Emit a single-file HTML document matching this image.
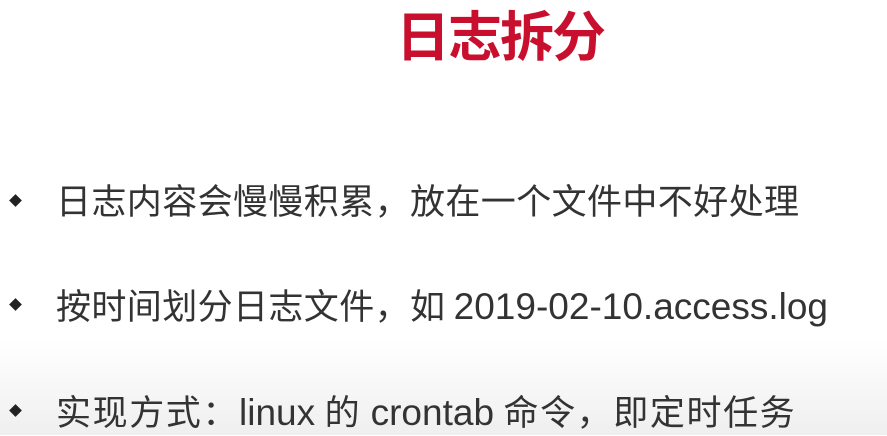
<!DOCTYPE html>
<html><head><meta charset="utf-8"><style>
html,body{margin:0;padding:0}
body{width:887px;height:435px;overflow:hidden;position:relative;background:linear-gradient(#fff 0,#fff 340px,#efefef 435px);font-family:"Liberation Sans","Noto Sans CJK SC",sans-serif}
.t{position:absolute;left:396px;top:0px;font-size:54px;font-weight:bold;color:#c8102e;font-family:"Noto Sans CJK SC",sans-serif;letter-spacing:-2px;line-height:66px}
.l{position:absolute;left:56px;font-size:35px;color:#333;white-space:nowrap;line-height:44px;font-family:"Noto Sans CJK SC",sans-serif;letter-spacing:0.4px}
.l span{font-family:"Liberation Sans",sans-serif;letter-spacing:0;font-size:37px}
.b{position:absolute;left:11px;width:9px;height:9px;background:#222;transform:rotate(45deg)}
</style></head><body>
<div class="t">日志拆分</div>
<div class="b" style="top:196px"></div>
<div class="l" style="top:178px">日志内容会慢慢积累，放在一个文件中不好处理</div>
<div class="b" style="top:300px"></div>
<div class="l" style="top:283px">按时间划分日志文件，如 <span>2019-02-10.access.log</span></div>
<div class="b" style="top:406px"></div>
<div class="l" style="top:389px;letter-spacing:1.6px">实现方式：<span>linux</span> 的 <span>crontab</span> 命令，即定时任务</div>
</body></html>
